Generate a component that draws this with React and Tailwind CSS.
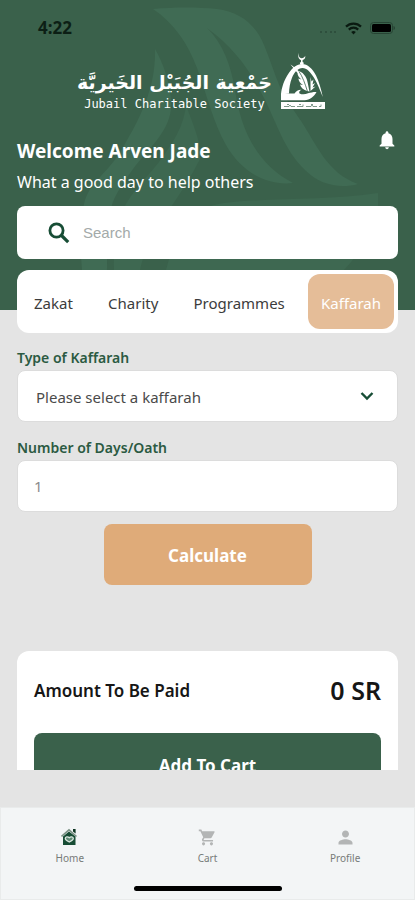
import { useState } from 'react';
import { MdNotifications, MdShoppingCart, MdPerson } from 'react-icons/md';

const tabs = ['Zakat', 'Charity', 'Programmes', 'Kaffarah'];

function StatusBar() {
  return (
    <div className="flex h-13 items-center justify-between pl-[38px] pr-5 pt-1">
      <span className="text-[17px] font-bold leading-5 text-[#0c1f15]">4:22</span>
      <div className="flex items-center gap-2">
        <svg width="18" height="12" viewBox="0 0 18 12" fill="#2b4a38" aria-hidden="true">
          <circle cx="2" cy="10" r="1" />
          <circle cx="7" cy="10" r="1" />
          <circle cx="12" cy="10" r="1" />
          <circle cx="16" cy="10" r="1" />
        </svg>
        <svg width="17" height="13" viewBox="0 0 17 13" fill="none" stroke="#0a1a11" strokeWidth="2.2" aria-hidden="true">
          <path d="M1 4.6a10.8 10.8 0 0 1 15 0" />
          <path d="M3.8 7.6a6.8 6.8 0 0 1 9.4 0" />
          <path d="M8.5 12.5 6.2 10a3.4 3.4 0 0 1 4.6 0z" fill="#0a1a11" stroke="none" />
        </svg>
        <svg width="25" height="12" viewBox="0 0 25 12" aria-hidden="true">
          <rect x="0.5" y="0.5" width="22" height="11" rx="3" fill="none" stroke="#274434" />
          <rect x="2" y="2" width="19" height="8" rx="1.5" fill="#000" />
          <path d="M23.5 4v4c1-.4 1.500-1.200 1.500-2s-.5-1.600-1.500-2z" fill="#274434" />
        </svg>
      </div>
    </div>
  );
}

function Emblem() {
  return (
    <svg width="46" height="58" viewBox="0 0 46 58" fill="#fff" aria-hidden="true">
      {/* crescent and finial */}
      <path d="M19 1c-.8 3 .4 5 2.500 5.200 1.700.1 3-.8 3.800-2.400.2 2.400-1 3.900-2.700 4.200v2l1.200.8-.4 1.700h-3.200l-.4-1.700 1.200-.8V8C18.600 7.400 17.500 4 19 1z" />
      {/* dome */}
      <path d="M1 42.500C1.500 36 4 28 9 20.800 12.500 15.500 17 12 22 12c5.500 0 10.500 4.500 14 11.500 3 6 5 13.500 6.800 21.500-2.800-6.500-5.300-13.500-8.800-19.200-3.400-5.600-7.300-9.800-11.500-9.800-4.500 0-8.300 4.300-10.500 9.800-2 5-2.800 10.500-3 15.700z" />
      {/* open hand */}
      <path d="M1 41.500h13.500c1.500-2.500 4-4 7-3.800-2 1-2.800 2.500-2 3.800 2.500 1.300 6 1 8.500-.3 3-.7 6-1.500 8.500-1.200-2.500 4.500-6.500 8-12 8.200H1z" />
      {/* palm leaf */}
      <path d="M10.500 12.500c3 2 6 4.500 8 6.500 4 1 7 4.500 8.500 9 1 3.500 1.500 7.500 2.500 11.500l-2.500-.5c-4-1.500-6.500-4-7-6.500l3 .5c-2.500-1.500-4.500-4-4.600-6.500l3 1c-2.300-2-3.900-4-3.900-6.500z" />
      <path d="m30.500 25 1 4.500 2-2-1 5 2.500-1.500-2.500 4.500 3-1-5 4.500z" />
      <path d="M19 19.500c3.500 5 6 12 8.500 20" fill="none" stroke="#3a614b" strokeWidth="0.8" />
      <rect x="1" y="50" width="44" height="7" />
      <path d="M4 54.500h5l1-1.500 1 1.500h4m2 0h6v-2m3 2h5l1-1.500 1 1.500h4m2 0h2v-2M7 52.500h2m10 0h2m10 0h2" fill="none" stroke="#5f806e" strokeWidth="0.8" />
    </svg>
  );
}

function Watermark() {
  return (
    <svg className="absolute inset-x-0 top-0 h-[310px] w-full" viewBox="0 0 415 310" preserveAspectRatio="none" fill="#406b54" aria-hidden="true">
      <path d="M153 9c22-2 44-2 64 0 22 3 38 14 47 36 6 14 10 28 16 42 6 13 13 22 21 34 16 24 26 52 57 63-18 5-38 1-53-14-20-19-28-46-40-70-13-26-28-50-58-72 16 15 24 38 28 62 5 34 18 72 58 93-28 3-52-12-67-38-13-23-19-50-29-77-9-24-22-44-44-59z" />
      <path d="M155 49c8 14 14 30 16 50 3 30-22 48-38 70-12 17-21 29-23 45-3 18-3 38-3 56H82c-2-26-3-50 3-70 7-20 24-28 37-51 19-32 34-62 33-100z" />
      <path d="M186 105c6 17 16 38 14 54-8 16-17 30-27 45-13 20-27 38-33 66h-26c-1-20 2-42 9-60 8-18 22-30 36-48 14-19 25-36 27-57z" fill="#3e6851" />
      <path d="M166 270c10-38 22-62 58-67 51-6 102-2 154-10v14c-8 28-18 46-34 63z" fill="#3e6851" />
    </svg>
  );
}

function SearchIcon() {
  return (
    <svg width="28" height="28" viewBox="0 0 28 28" fill="none" stroke="#174d35" strokeWidth="2.800" className="shrink-0" aria-hidden="true">
      <circle cx="11.500" cy="11.500" r="6.600" />
      <path d="m16 16 7.200 7.200" strokeWidth="3.200" />
    </svg>
  );
}

function HouseHeart() {
  return (
    <svg width="17" height="18" viewBox="0 0 17 18" aria-hidden="true">
      <path d="M2 8.500 8 3.500l6.500 5V17H2z" fill="#174d35" />
      <path d="M.5 8.500 8 1.800l7.500 6.700" fill="none" stroke="#7b9386" strokeWidth="1.600" />
      <path d="M12 1h2.600v4.500L12 3.500z" fill="#0b3320" />
      <path d="M8.300 14c-2.500-1.300-4-2.200-4-3.500 0-1.800 2.600-2.200 4-.8 1.400-1.400 4-1 4 .8 0 1.300-1.500 2.200-4 3.500z" fill="#5f8a75" stroke="#dbe7e0" strokeWidth="1.300" />
    </svg>
  );
}

function Header() {
  return (
    <header className="relative shrink-0 bg-[#3a614b] pb-[51px]">
      <Watermark />
      <div className="relative">
        <StatusBar />
        <div className="flex items-start justify-center gap-2 pr-3">
          <div className="pt-4 text-center text-white">
            <p dir="rtl" lang="ar" className="font-['DejaVu_Sans',sans-serif] text-[19px] font-bold leading-7">جَمْعِية الجُبَيْل الخَيريَّة</p>
            <p className="font-['DejaVu_Sans_Mono',monospace] text-xs leading-4">Jubail Charitable Society</p>
          </div>
          <Emblem />
        </div>
        <div className="flex items-start justify-between px-[17px] pt-[25px] text-white">
          <div>
            <h1 className="text-[19px] font-bold leading-7">Welcome Arven Jade</h1>
            <p className="pt-[3px] text-base leading-7">What a good day to help others</p>
          </div>
          <button type="button" aria-label="Notifications" className="-mt-2">
            <MdNotifications size={22} />
          </button>
        </div>
        <label className="mx-[17px] mt-[10px] flex h-[53px] items-center gap-[10px] rounded-lg bg-white pl-7 pr-4">
          <SearchIcon />
          <input type="search" aria-label="Search" placeholder="Search" className="w-full min-w-0 bg-transparent pt-[2px] font-['Liberation_Sans',Arial,sans-serif] text-[15px] text-gray-700 outline-none placeholder:text-[#a3aaa9]" />
        </label>
      </div>
    </header>
  );
}

function BottomNav() {
  return (
    <nav className="shrink-0 border border-[#e9ebeb] bg-[#f3f5f6] pb-2">
      <div className="grid grid-cols-3 pt-5 text-[10px] leading-4 text-[#777b79]">
        <a href="#home" className="flex flex-col items-center gap-1">
          <span className="flex h-[18px] items-center"><HouseHeart /></span>
          Home
        </a>
        <a href="#cart" className="flex flex-col items-center gap-1">
          <span className="flex h-[18px] items-center"><MdShoppingCart size={19} className="text-[#b3b5b5]" /></span>
          Cart
        </a>
        <a href="#profile" className="flex flex-col items-center gap-1">
          <span className="flex h-[18px] items-center"><MdPerson size={21} className="text-[#b3b5b5]" /></span>
          Profile
        </a>
      </div>
      <div className="mx-auto mt-5 h-[5px] w-[148px] rounded-full bg-black"></div>
    </nav>
  );
}

function App() {
  const [active, setActive] = useState('Kaffarah');

  return (
    <div className="flex h-screen flex-col bg-[#e4e4e4] font-['Noto_Sans','Open_Sans',sans-serif]">
      <Header />
      <div className="relative mx-[17px] -mt-10 flex h-[63px] shrink-0 items-center justify-between rounded-xl bg-white p-1 pl-[5px] text-[15px] text-[#3c3c3c]">
        {tabs.map((tab) => (
          <button
            key={tab}
            type="button"
            onClick={() => setActive(tab)}
            className={tab === active ? 'h-full rounded-xl bg-[#e5bd98] px-[13px] pt-[3px] text-white' : 'h-full px-3 pt-[3px]'}
          >
            {tab}
          </button>
        ))}
      </div>

      <main className="mb-[37px] min-h-0 flex-1 overflow-hidden px-[17px] pt-[13px]">
        <label htmlFor="type" className="block text-sm font-semibold leading-6 text-[#2b5a42]">Type of Kaffarah</label>
        <div className="relative">
          <select id="type" className="h-[52px] w-full appearance-none rounded-lg border border-[#dcdcdc] bg-white pl-[18px] pr-12 pt-[3px] text-[15px] text-[#4a4a4a]">
            <option>Please select a kaffarah</option>
          </select>
          <svg width="14" height="10" viewBox="0 0 14 10" fill="none" stroke="#174d35" strokeWidth="2.400" className="pointer-events-none absolute right-6 top-[21px]" aria-hidden="true">
            <path d="m1.500 2 5.500 5.500L12.500 2" />
          </svg>
        </div>

        <label htmlFor="days" className="mt-[14px] block text-sm font-semibold leading-6 text-[#2b5a42]">Number of Days/Oath</label>
        <input id="days" type="text" placeholder="1" className="h-[52px] w-full rounded-lg border border-[#dcdcdc] bg-white px-4 text-[15px] text-[#4a4a4a] placeholder:text-[#8b8b8b]" />

        <button type="button" className="mx-auto mt-3 block h-[61px] w-[208px] rounded-lg bg-[#dfab79] pt-[3px] text-[17px] font-bold text-white">Calculate</button>

        <section className="mt-[66px] rounded-xl bg-white px-[17px] pb-6 pt-5">
          <div className="flex h-10 items-center justify-between text-[#161616]">
            <h2 className="text-[17px] font-semibold">Amount To Be Paid</h2>
            <span className="text-[25px] font-semibold">0 SR</span>
          </div>
          <button type="button" className="mt-[22px] h-[63px] w-full rounded-lg bg-[#3a614b] pt-[3px] text-[17px] font-bold text-white">Add To Cart</button>
        </section>
      </main>

      <BottomNav />
    </div>
  );
}

export default App;
